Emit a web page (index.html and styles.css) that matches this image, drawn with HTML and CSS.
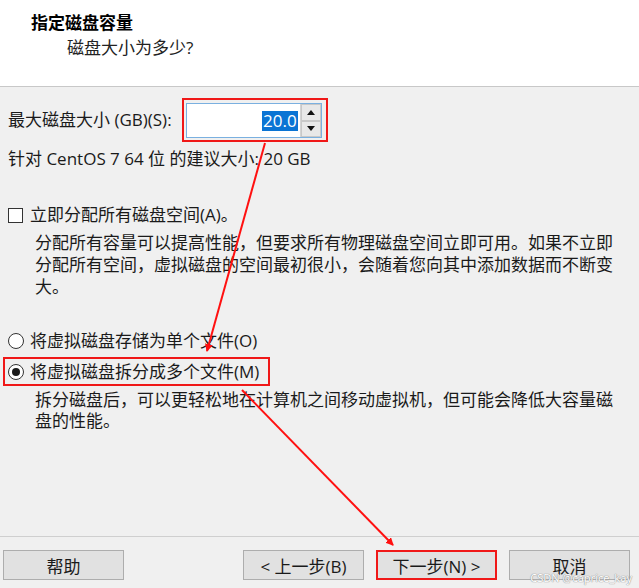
FILE: index.html
```html
<!DOCTYPE html>
<html lang="zh-CN">
<head>
<meta charset="utf-8">
<title>指定磁盘容量</title>
<link rel="stylesheet" href="styles.css">
</head>
<body>
<div class="page">
  <div class="header">
    <div class="title">指定磁盘容量</div>
    <div class="subtitle">磁盘大小为多少?</div>
  </div>
  <div class="content">
    <div class="size-row">
      <span class="label">最大磁盘大小 (GB)(S):</span>
      <div class="mark spin-mark">
        <div class="spin">
          <div class="spin-input"><span class="sel">20.0</span></div>
          <div class="spin-btns">
            <div class="spin-btn"><span class="tri up"></span></div>
            <div class="spin-btn"><span class="tri down"></span></div>
          </div>
        </div>
      </div>
    </div>
    <div class="hint">针对 CentOS 7 64 位 的建议大小: 20 GB</div>
    <div class="option check-row"><span class="checkbox"></span>立即分配所有磁盘空间(A)。</div>
    <p class="desc desc-a">分配所有容量可以提高性能，但要求所有物理磁盘空间立即可用。如果不立即<br>分配所有空间，虚拟磁盘的空间最初很小，会随着您向其中添加数据而不断变<br>大。</p>
    <div class="option radio-row first"><span class="radio"></span>将虚拟磁盘存储为单个文件(O)</div>
    <div class="option radio-row mark radio-mark"><span class="radio on"></span>将虚拟磁盘拆分成多个文件(M)</div>
    <p class="desc desc-b">拆分磁盘后，可以更轻松地在计算机之间移动虚拟机，但可能会降低大容量磁<br>盘的性能。</p>
  </div>
  <div class="footer">
    <button class="btn">帮助</button>
    <div class="btn-group">
      <button class="btn">&lt; 上一步(B)</button>
      <button class="btn next">下一步(N) &gt;</button>
      <button class="btn">取消</button>
    </div>
  </div>
  <svg class="arrows" width="639" height="588" viewBox="0 0 639 588">
    <defs>
      <marker id="ah" markerWidth="8" markerHeight="8" refX="7" refY="4" orient="auto" markerUnits="userSpaceOnUse">
        <path d="M0,0 L8,4 L0,8 Z" fill="#ff1010"/>
      </marker>
    </defs>
    <line x1="265" y1="143" x2="207" y2="351" stroke="#ff1010" stroke-width="2" marker-end="url(#ah)"/>
    <line x1="242" y1="390" x2="393" y2="545" stroke="#ff1010" stroke-width="2" marker-end="url(#ah)"/>
  </svg>
  <div class="watermark">CSDN @caprice_kay</div>
</div>
</body>
</html>
```
FILE: styles.css
```css
* { box-sizing: border-box; }
html, body { margin: 0; padding: 0; }
body {
  background: #f0f0f0;
  font-family: "Open Sans", "Noto Sans CJK SC", sans-serif;
  font-size: 17px;
  color: #1a1a1a;
}
.page {
  position: relative;
  width: 639px;
  height: 588px;
  display: flex;
  flex-direction: column;
  overflow: hidden;
}
.header {
  background: #fff;
  height: 87px;
  border-bottom: 1px solid #c8c8c8;
  padding: 11px 0 0 31px;
}
.title {
  font-weight: bold;
  line-height: 24px;
  color: #000;
}
.subtitle {
  padding-left: 36px;
  line-height: 24px;
  margin-top: 1px;
  color: #222;
}
.content {
  flex: 1;
  padding-left: 8px;
}
.size-row {
  display: flex;
  align-items: center;
  margin-top: 11px;
  height: 44px;
}
.label { line-height: 24px; }
.mark { border: 2px solid #f01818; }
.spin-mark {
  margin-left: 10px;
  padding: 3px 4px 2px 2px;
}
.spin {
  display: flex;
  width: 136px;
  height: 35px;
  border: 1px solid #7ab0e0;
  background: #fff;
}
.spin-input {
  flex: 1;
  display: flex;
  align-items: center;
  justify-content: flex-end;
  padding-right: 2px;
}
.sel {
  background: #0a74d4;
  color: #fff;
  line-height: 20px;
  padding: 0 1px;
}
.spin-btns {
  width: 21px;
  display: flex;
  flex-direction: column;
  border-left: 1px solid #d4d4d4;
}
.spin-btn {
  flex: 1;
  background: #e8e8e8;
  border: 1px solid #c8c8c8;
  display: flex;
  align-items: center;
  justify-content: center;
}
.tri { width: 0; height: 0; border-left: 4px solid transparent; border-right: 4px solid transparent; }
.tri.up { border-bottom: 5px solid #111; }
.tri.down { border-top: 5px solid #111; }
.hint {
  line-height: 24px;
  margin-top: 5px;
}
.option {
  display: flex;
  align-items: center;
  line-height: 24px;
}
.check-row { margin-top: 32px; }
.checkbox {
  width: 15px;
  height: 15px;
  border: 1px solid #333;
  background: #fff;
  margin-right: 7px;
}
.desc {
  margin: 5px 0 0 27px;
  line-height: 22px;
}
.radio-row.first { margin-top: 31px; }
.radio {
  width: 16px;
  height: 16px;
  border: 1px solid #333;
  border-radius: 50%;
  background: #fff;
  margin-right: 6px;
  display: flex;
  align-items: center;
  justify-content: center;
}
.radio.on::after {
  content: "";
  width: 8px;
  height: 8px;
  border-radius: 50%;
  background: #1a1a1a;
}
.radio-mark {
  margin: 4px 0 0 -5px;
  width: 267px;
  height: 29px;
  padding-left: 3px;
}
.desc-b {
  margin-top: 3px;
  line-height: 21px;
}
.footer {
  height: 52px;
  border-top: 1px solid #cfcfcf;
  display: flex;
  justify-content: space-between;
  align-items: flex-start;
  padding: 13px 9px 0 3px;
}
.btn-group {
  display: flex;
  gap: 12px;
}
.btn {
  width: 121px;
  height: 30px;
  background: #e1e1e1;
  border: 1px solid #adadad;
  font-family: inherit;
  font-size: 17px;
  color: #1a1a1a;
  padding: 0;
}
.btn.next { border: 2px solid #f01818; }
.arrows {
  position: absolute;
  left: 0;
  top: 0;
  pointer-events: none;
}
.watermark {
  position: absolute;
  right: 7px;
  bottom: 3px;
  font-size: 11px;
  color: #fff;
  text-shadow: 0 0 1px #888, 0 0 1px #888;
  font-family: "Noto Sans", sans-serif;
}
```
